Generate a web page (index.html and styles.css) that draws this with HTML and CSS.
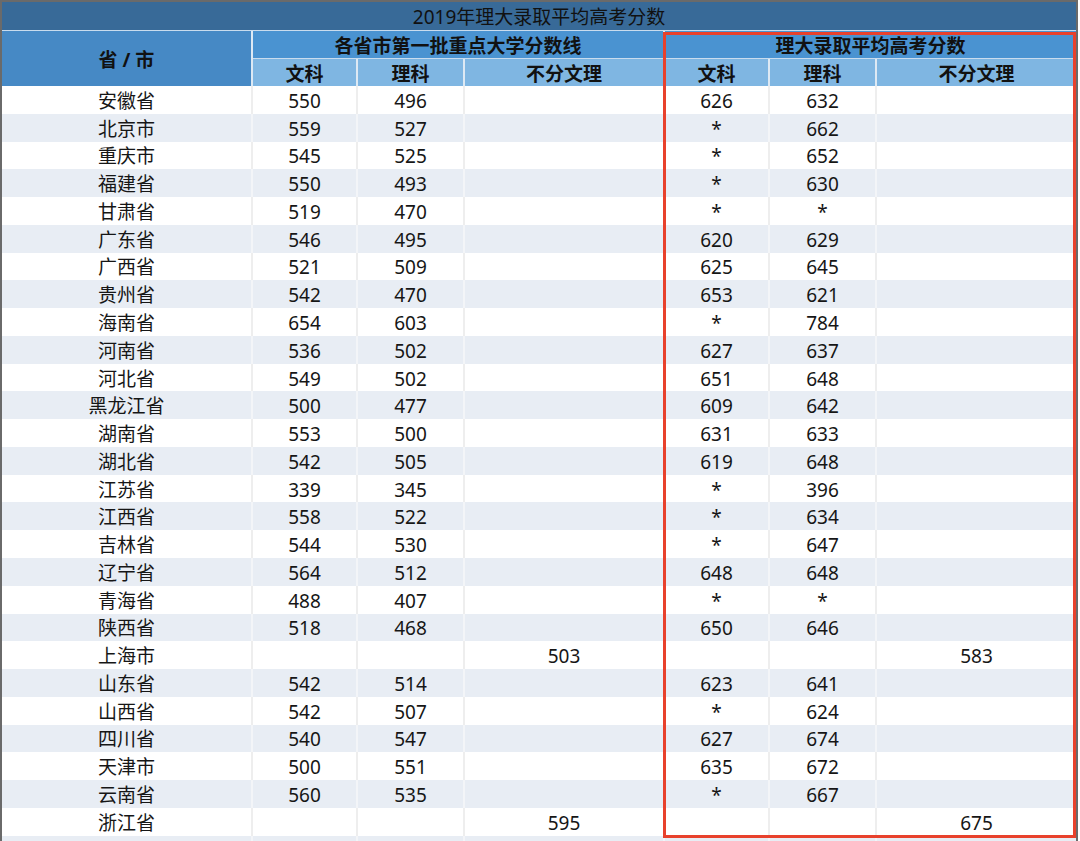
FILE: index.html
```html
<!DOCTYPE html>
<html lang="zh-CN">
<head>
<meta charset="utf-8">
<title>2019年理大录取平均高考分数</title>
<link rel="stylesheet" href="styles.css">
</head>
<body>
<div class="frame">
  <table class="scores">
    <colgroup>
      <col class="c-prov">
      <col class="c-a">
      <col class="c-b">
      <col class="c-c">
      <col class="c-a">
      <col class="c-b">
      <col class="c-d">
    </colgroup>
    <thead>
      <tr class="title-row"><th colspan="7" class="title">2019年理大录取平均高考分数</th></tr>
      <tr class="head1">
        <th rowspan="2" class="prov-head">省 / 市</th>
        <th colspan="3" class="group">各省市第一批重点大学分数线</th>
        <th colspan="3" class="group last">理大录取平均高考分数</th>
      </tr>
      <tr class="head2">
        <th>文科</th><th>理科</th><th>不分文理</th>
        <th>文科</th><th>理科</th><th class="last">不分文理</th>
      </tr>
    </thead>
    <tbody>
      <tr><td>安徽省</td><td>550</td><td>496</td><td></td><td>626</td><td>632</td><td></td></tr>
      <tr><td>北京市</td><td>559</td><td>527</td><td></td><td>*</td><td>662</td><td></td></tr>
      <tr><td>重庆市</td><td>545</td><td>525</td><td></td><td>*</td><td>652</td><td></td></tr>
      <tr><td>福建省</td><td>550</td><td>493</td><td></td><td>*</td><td>630</td><td></td></tr>
      <tr><td>甘肃省</td><td>519</td><td>470</td><td></td><td>*</td><td>*</td><td></td></tr>
      <tr><td>广东省</td><td>546</td><td>495</td><td></td><td>620</td><td>629</td><td></td></tr>
      <tr><td>广西省</td><td>521</td><td>509</td><td></td><td>625</td><td>645</td><td></td></tr>
      <tr><td>贵州省</td><td>542</td><td>470</td><td></td><td>653</td><td>621</td><td></td></tr>
      <tr><td>海南省</td><td>654</td><td>603</td><td></td><td>*</td><td>784</td><td></td></tr>
      <tr><td>河南省</td><td>536</td><td>502</td><td></td><td>627</td><td>637</td><td></td></tr>
      <tr><td>河北省</td><td>549</td><td>502</td><td></td><td>651</td><td>648</td><td></td></tr>
      <tr><td>黑龙江省</td><td>500</td><td>477</td><td></td><td>609</td><td>642</td><td></td></tr>
      <tr><td>湖南省</td><td>553</td><td>500</td><td></td><td>631</td><td>633</td><td></td></tr>
      <tr><td>湖北省</td><td>542</td><td>505</td><td></td><td>619</td><td>648</td><td></td></tr>
      <tr><td>江苏省</td><td>339</td><td>345</td><td></td><td>*</td><td>396</td><td></td></tr>
      <tr><td>江西省</td><td>558</td><td>522</td><td></td><td>*</td><td>634</td><td></td></tr>
      <tr><td>吉林省</td><td>544</td><td>530</td><td></td><td>*</td><td>647</td><td></td></tr>
      <tr><td>辽宁省</td><td>564</td><td>512</td><td></td><td>648</td><td>648</td><td></td></tr>
      <tr><td>青海省</td><td>488</td><td>407</td><td></td><td>*</td><td>*</td><td></td></tr>
      <tr><td>陕西省</td><td>518</td><td>468</td><td></td><td>650</td><td>646</td><td></td></tr>
      <tr><td>上海市</td><td></td><td></td><td>503</td><td></td><td></td><td>583</td></tr>
      <tr><td>山东省</td><td>542</td><td>514</td><td></td><td>623</td><td>641</td><td></td></tr>
      <tr><td>山西省</td><td>542</td><td>507</td><td></td><td>*</td><td>624</td><td></td></tr>
      <tr><td>四川省</td><td>540</td><td>547</td><td></td><td>627</td><td>674</td><td></td></tr>
      <tr><td>天津市</td><td>500</td><td>551</td><td></td><td>635</td><td>672</td><td></td></tr>
      <tr><td>云南省</td><td>560</td><td>535</td><td></td><td>*</td><td>667</td><td></td></tr>
      <tr><td>浙江省</td><td></td><td></td><td>595</td><td></td><td></td><td>675</td></tr>
      <tr><td></td><td></td><td></td><td></td><td></td><td></td><td></td></tr>
    </tbody>
  </table>
  <div class="highlight"></div>
</div>
</body>
</html>
```

FILE: styles.css
```css
html, body {
  margin: 0;
  padding: 0;
  background: #ffffff;
  overflow: hidden;
}

body {
  font-family: "Noto Sans", "Noto Sans CJK SC", sans-serif;
  font-size: 19px;
  color: #161616;
}

.frame {
  position: relative;
  width: 1074px;
  border-top: 2px solid #6a6a6a;
  border-left: 2px solid #6a6a6a;
  border-right: 2px solid #6a6a6a;
}

.scores {
  width: 1074px;
  table-layout: fixed;
  border-collapse: separate;
  border-spacing: 0;
}

.c-prov { width: 251px; }
.c-a { width: 105px; }
.c-b { width: 107px; }
.c-c { width: 200px; }
.c-d { width: 199px; }

.scores th,
.scores td {
  padding: 2px 0 0;
  text-align: center;
  vertical-align: middle;
  line-height: 22px;
  box-sizing: border-box;
}

.title-row th {
  height: 29px;
  background: #386a98;
  font-weight: 400;
  color: #111;
  border-bottom: 1px solid #c9dcee;
}

.head1 th {
  height: 28px;
  font-weight: 700;
  color: #111;
}

.prov-head {
  background: #4689c5;
  border-right: 2px solid #dde9f4;
}

.group {
  background: #4a93d1;
  border-right: 2px solid #dde9f4;
  border-bottom: 1px solid #c9dcee;
}

.group.last,
.head2 th.last {
  border-right: 0;
}

.head2 th {
  height: 27px;
  background: #7fb6e2;
  font-weight: 700;
  color: #111;
  border-right: 2px solid #dde9f4;
}

.scores tbody tr {
  height: 27.77px;
}

.scores tbody td {
  border-right: 2px solid #eeeeee;
}

.scores tbody td:last-child {
  border-right: 0;
}

.scores tbody tr:nth-child(even) td {
  background: #e8edf4;
  border-right-color: #f3f5f8;
}

.highlight {
  position: absolute;
  left: 661px;
  top: 30px;
  width: 407px;
  height: 800px;
  border: 3px solid #e8412c;
  pointer-events: none;
}
```
